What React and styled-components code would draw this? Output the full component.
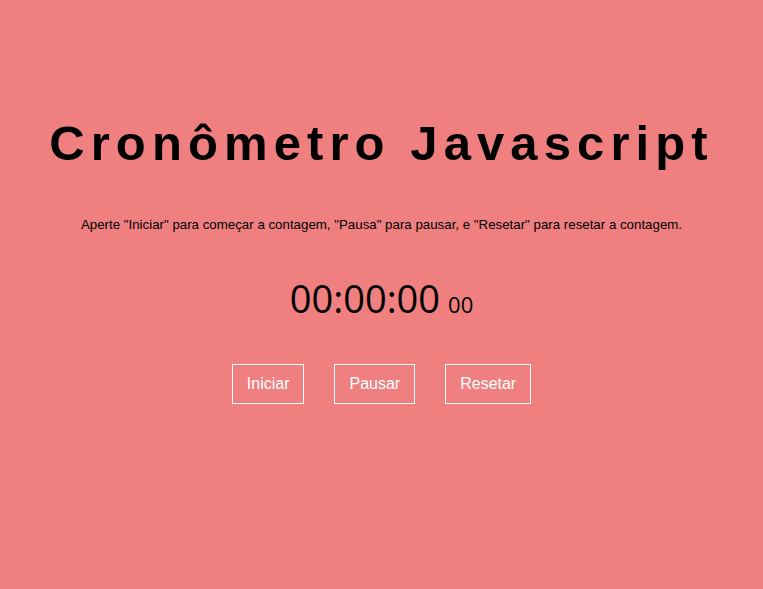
import styled, { createGlobalStyle } from "styled-components";

const Global = createGlobalStyle`
  html, body {
    margin: 0;
    padding: 0;
    background: #f08080;
  }
  body {
    font-family: "Liberation Sans", Arial, sans-serif;
  }
`;

const Page = styled.main`
  min-height: 589px;
  display: flex;
  flex-direction: column;
  align-items: center;
  padding-top: 117px;
  box-sizing: border-box;
`;

const Title = styled.h1`
  margin: 0;
  font-size: 49px;
  font-weight: 700;
  letter-spacing: 6.1px;
  color: #000;
  line-height: 52px;
`;

const Hint = styled.p`
  margin: 48px 0 0;
  font-size: 13.3px;
  color: #000;
`;

const Clock = styled.div`
  margin-top: 40px;
  font-family: "Open Sans", "Noto Sans", sans-serif;
  font-size: 38px;
  color: #000;
  display: flex;
  align-items: baseline;
  gap: 8px;
`;

const Tenths = styled.span`
  font-size: 22px;
`;

const Actions = styled.div`
  margin-top: 40px;
  display: flex;
  gap: 30px;
`;

const Button = styled.button`
  background: transparent;
  border: 1px solid #fff;
  color: #fff;
  font-family: "Liberation Sans", Arial, sans-serif;
  font-size: 16px;
  padding: 10px 14px;
  cursor: pointer;
`;

export default function App() {
  return (
    <Page>
      <Global />
      <Title>Cronômetro Javascript</Title>
      <Hint>
        Aperte "Iniciar" para começar a contagem, "Pausa" para pausar, e "Resetar" para resetar a contagem.
      </Hint>
      <Clock>
        <span>00:00:00</span>
        <Tenths>00</Tenths>
      </Clock>
      <Actions>
        <Button>Iniciar</Button>
        <Button>Pausar</Button>
        <Button>Resetar</Button>
      </Actions>
    </Page>
  );
}
